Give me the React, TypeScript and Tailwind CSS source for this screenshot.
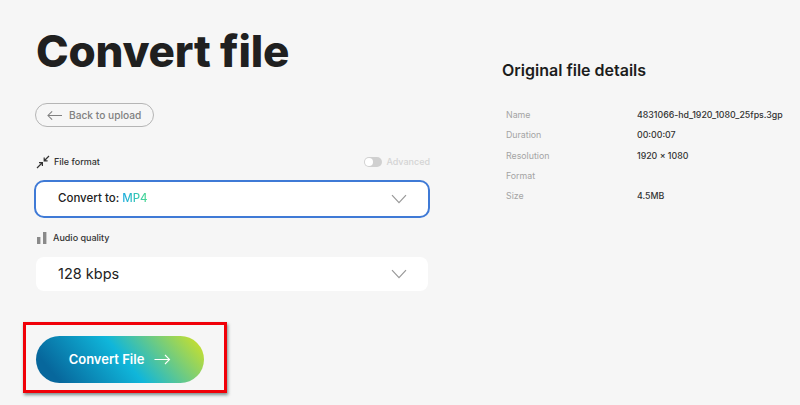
const details = [
  { label: "Name", value: "4831066-hd_1920_1080_25fps.3gp" },
  { label: "Duration", value: "00:00:07" },
  { label: "Resolution", value: "1920 × 1080" },
  { label: "Format", value: "" },
  { label: "Size", value: "4.5MB" },
];

function CompressIcon() {
  return (
    <svg width="14" height="14" viewBox="0 0 14 14" fill="none" stroke="#333" strokeWidth="1.2">
      <path d="M1 13 6 8M3 7.6h3.4V11" />
      <path d="M8.5 5.5 13 1M8.2 2.4v3.4h3.4" />
    </svg>
  );
}

function BarsIcon() {
  return (
    <svg width="10" height="12" viewBox="0 0 10 12" fill="#8a8a8a">
      <rect x="0" y="5" width="3.4" height="7" />
      <rect x="6" y="0" width="3.4" height="12" />
    </svg>
  );
}

function Chevron() {
  return (
    <svg width="16" height="10" viewBox="0 0 16 10" fill="none" stroke="#999" strokeWidth="1.2">
      <path d="M1 1.2 8 8.6l7-7.4" />
    </svg>
  );
}

function LongArrow({ left, size }: { left?: boolean; size: number }) {
  return (
    <svg width={size} height="11" viewBox="0 0 16 11" fill="none" stroke="currentColor" strokeWidth="1.1" className={left ? "rotate-180" : ""}>
      <path d="M0 5.5h15M10.5 1 15 5.5 10.5 10" />
    </svg>
  );
}

export default function App() {
  return (
    <div className="w-[800px] h-[405px] overflow-hidden bg-[#f6f6f6] flex font-['Inter',sans-serif] text-[#222]">
      <div className="w-[502px] shrink-0 pl-[34px] flex flex-col items-start">
        <h1 className="ml-[2px] mt-[23px] text-[44px] leading-[56px] font-extrabold tracking-[-0.2px] text-[#202020]">Convert file</h1>

        <button className="ml-[1px] mt-[24px] w-[119px] h-[24px] rounded-full border border-[#b5b5b5] flex items-center pl-[11px] gap-[7px] pt-[1px] text-[10.2px] font-medium text-[#808080]">
          <LongArrow left size={15} />
          Back to upload
        </button>

        <div className="mt-[27px] w-[396px] h-[16px] flex items-center justify-between">
          <div className="flex items-center gap-[4px] pl-[2px] text-[9px] font-medium text-[#333]">
            <CompressIcon />
            File format
          </div>
          <div className="flex items-center gap-[4px] text-[9px] font-medium text-[#d4d4d4]">
            <span className="w-[18px] h-[10px] rounded-full bg-[#d0d0d0] flex items-center pl-[1px]">
              <span className="w-[8px] h-[8px] rounded-full bg-white" />
            </span>
            Advanced
          </div>
        </div>

        <div className="mt-[10px] w-[396px] h-[38px] rounded-[10px] border-2 border-[#3f7ad6] bg-white flex items-center justify-between pl-[22px] pr-[21px]">
          <span className="text-[11.5px] font-medium text-[#222]">
            Convert to:{" "}
            <span className="bg-gradient-to-r from-[#1ba9e0] to-[#4cd98a] bg-clip-text text-transparent">MP4</span>
          </span>
          <Chevron />
        </div>

        <div className="mt-[12px] ml-[3px] h-[16px] flex items-center gap-[6px] text-[9px] font-medium text-[#333]">
          <BarsIcon />
          Audio quality
        </div>

        <div className="mt-[11px] ml-[2px] w-[392px] h-[34px] rounded-[8px] bg-white flex items-center justify-between pl-[22px] pr-[21px]">
          <span className="text-[14.5px] text-[#222]">128 kbps</span>
          <Chevron />
        </div>

        <div className="mt-[31px] -ml-[11px] w-[204px] h-[71px] border-[3px] border-[#f00008] shadow-[1px_2px_3px_rgba(40,70,70,0.6)] pl-[10px] pt-[11px]">
          <button className="w-[168px] h-[47px] rounded-full bg-[linear-gradient(50deg,#07679c_12%,#10b6da_52%,#c3de32_95%)] flex items-center justify-center gap-[10px] text-[13px] font-semibold text-white">
            Convert File
            <LongArrow size={17} />
          </button>
        </div>
      </div>

      <div className="flex-1 pt-[60px]">
        <h2 className="text-[16px] leading-[20px] font-semibold text-[#1c1c1c]">Original file details</h2>
        <div className="mt-[24.5px] pl-[4px] flex flex-col">
          {details.map((row) => (
            <div key={row.label} className="flex h-[20.3px] items-center text-[8.8px]">
              <span className="w-[131px] text-[#a4a4a4]">{row.label}</span>
              <span className="font-medium text-[#333]">{row.value}</span>
            </div>
          ))}
        </div>
      </div>
    </div>
  );
}
